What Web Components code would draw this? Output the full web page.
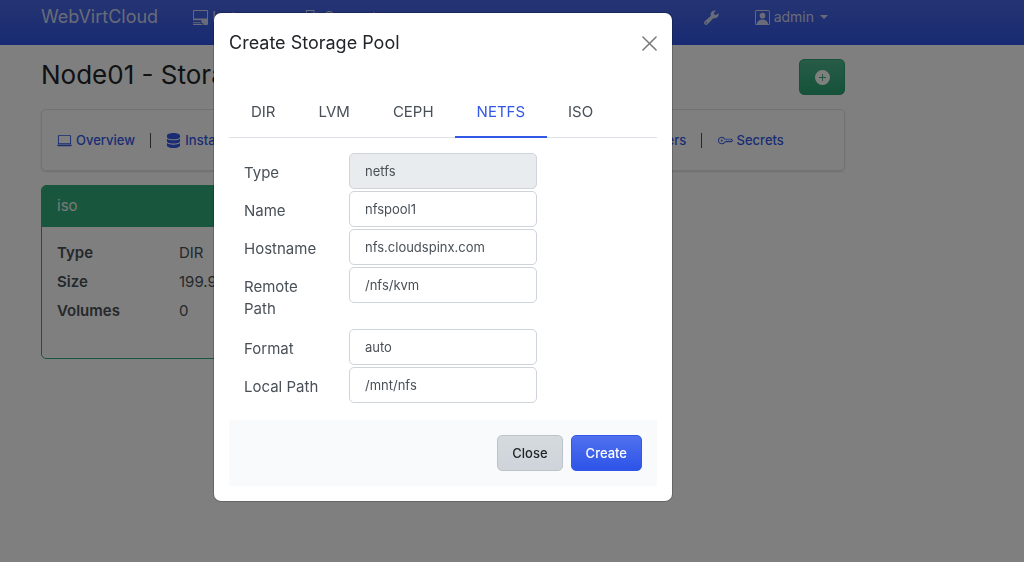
<!DOCTYPE html>
<html lang="en">
<head>
<meta charset="utf-8">
<meta name="viewport" content="width=device-width, initial-scale=1">
<title>WebVirtCloud</title>
<style>
  body { margin: 0; font: 15px/22px Inter, "Liberation Sans", sans-serif; color: #495057; background: #fff; --primary: #3358e8; --green: #30ac7b; --edge: 138px; }
</style>
</head>
<body>
<wvc-navbar></wvc-navbar>
<wvc-page heading="Node01 - Storages">
  <wvc-subnav></wvc-subnav>
  <wvc-pool-card name="iso" type="DIR" size="199.9 GB" volumes="0"></wvc-pool-card>
</wvc-page>
<wvc-modal heading="Create Storage Pool">
  <wvc-tabs items="DIR,LVM,CEPH,NETFS,ISO" active="NETFS"></wvc-tabs>
  <wvc-pool-form></wvc-pool-form>
</wvc-modal>
<script>
const ICONS = {
  instances: '<path fill-rule="evenodd" d="M1 0h14a1 1 0 0 1 1 1v14a1 1 0 0 1-1 1h-4v-2H9v-2H0V1a1 1 0 0 1 1-1zm0 1v8h14V1zM0 11h9v1H0zM0 13h8v1H0zM0 15h10v1H0z"/>',
  computes: '<path fill-rule="evenodd" d="M1 0h9v3h5v12H7v-3H1zm1 1v10h5V3h2V1zm6 3v10h6V4zM9 5h4v1H9z"/>',
  wrench: '<path fill-rule="evenodd" d="M15.300 3.100 13 5.400l-2-.5-.5-2L12.800.7A4.300 4.300 0 0 0 7.300 6L.8 12.100a2.100 2.100 0 0 0 3 3.100L10 8.700a4.300 4.300 0 0 0 5.300-5.600zM2.300 14.500a.8.8 0 1 1 0-1.600.8.8 0 0 1 0 1.600z"/>',
  person: '<path d="M11 6a3 3 0 1 1-6 0 3 3 0 0 1 6 0"/><path fill-rule="evenodd" d="M2 0a2 2 0 0 0-2 2v12a2 2 0 0 0 2 2h12a2 2 0 0 0 2-2V2a2 2 0 0 0-2-2zm0 1h12a1 1 0 0 1 1 1v12a1 1 0 0 1-1 1c0-1-1-5-6-5s-6 4-6 5a1 1 0 0 1-1-1V2a1 1 0 0 1 1-1"/>',
  laptop: '<path d="M13.5 3a.5.5 0 0 1 .5.5V11H2V3.500a.5.5 0 0 1 .5-.5zm-11-1A1.500 1.500 0 0 0 1 3.500V12h14V3.500A1.500 1.500 0 0 0 13.500 2zM0 12.500h16a1.500 1.500 0 0 1-1.500 1.500h-13A1.500 1.500 0 0 1 0 12.500"/>',
  stack: '<path d="M1 3c0-4 14-4 14 0v1.300c0 3.300-14 3.300-14 0zM1 6c2.500 2.400 11.500 2.400 14 0v2.800c0 3.300-14 3.300-14 0zM1 10.700c2.500 2.400 11.500 2.400 14 0V13c0 4-14 4-14 0z"/>',
  key: '<path d="M0 8a4 4 0 0 1 7.465-2H14a.5.5 0 0 1 .354.146l1.500 1.500a.5.5 0 0 1 0 .708l-1.500 1.500a.5.5 0 0 1-.708 0L13 9.207l-.646.647a.5.5 0 0 1-.708 0L11 9.207l-.646.647a.5.5 0 0 1-.708 0L9 9.207l-.646.647A.5.5 0 0 1 8 10h-.535A4 4 0 0 1 0 8m4-3a3 3 0 1 0 2.712 4.285A.5.5 0 0 1 7.163 9h.63l.853-.854a.5.5 0 0 1 .708 0l.646.647.646-.647a.5.5 0 0 1 .708 0l.646.647.646-.647a.5.5 0 0 1 .708 0l.646.647.793-.793-1-1h-6.630a.5.5 0 0 1-.451-.285A3 3 0 0 0 4 5"/><circle cx="4" cy="8" r="1"/>',
  plus: '<path fill-rule="evenodd" d="M16 8A8 8 0 1 1 0 8a8 8 0 0 1 16 0M8.500 4.500a.5.5 0 0 0-1 0v3h-3a.5.5 0 0 0 0 1h3v3a.5.5 0 0 0 1 0v-3h3a.5.5 0 0 0 0-1h-3z"/>',
  close: '<path d="M1 1l14 14M15 1L1 15" fill="none" stroke="currentColor" stroke-width="1.600" stroke-linecap="round"/>'
};

class Base extends HTMLElement {
  connectedCallback() {
    if (this.shadowRoot) return;
    this.attachShadow({ mode: "open" }).innerHTML =
      `<style>*{box-sizing:border-box}${this.css()}</style>${this.html()}`;
  }
}
const define = (tag, css, html) =>
  customElements.define(tag, class extends Base {
    css() { return css; }
    html() { return html(this); }
  });

define("wvc-icon",
  `:host{display:inline-flex;flex:none} svg{width:var(--size,15px);height:var(--size,15px);fill:currentColor}`,
  el => `<svg viewBox="0 0 16 16" aria-hidden="true">${ICONS[el.getAttribute("name")]}</svg>`);

define("wvc-navbar",
  `:host{display:block;background:linear-gradient(#4a68e4,#3055e4);color:#d2d7f0}
   nav{display:flex;align-items:center;height:45px;padding:0 calc(var(--edge) + 58px) 11px 41px}
   a{display:flex;align-items:center;gap:4px;color:inherit;text-decoration:none;font-size:14px}
   .brand{font-size:18px;margin-right:35px}
   .links{display:flex;gap:29px;flex:1}
   .tools{display:flex;gap:36px}
   .caret{border:4px solid transparent;border-top-color:currentColor;border-bottom:0;margin-left:2px}`,
  () => `<nav><a class="brand" href="#">WebVirtCloud</a>
   <div class="links"><a href="#"><wvc-icon name="instances"></wvc-icon>Instances</a>
   <a href="#"><wvc-icon name="computes"></wvc-icon>Computes</a></div>
   <div class="tools"><a href="#" aria-label="Settings"><wvc-icon name="wrench"></wvc-icon></a>
   <a href="#"><wvc-icon name="person"></wvc-icon>admin <span class="caret"></span></a></div></nav>`);

define("wvc-page",
  `:host{display:block;padding:14px calc(var(--edge) + 41px) 15px 41px}
   header{display:flex;justify-content:space-between;align-items:flex-start;margin-bottom:14px}
   h1{margin:0;font-size:26px;line-height:32px;font-weight:400;color:#212529}
   button{width:46px;height:36px;border:1px solid #2aa473;border-radius:5px;background:linear-gradient(#4fb88f,#2ba574);color:#fff;display:flex;align-items:center;justify-content:center}
   main{display:flex;flex-direction:column;gap:14px}`,
  el => `<header><h1>${el.getAttribute("heading")}</h1><button type="button" aria-label="Add storage"><wvc-icon name="plus"></wvc-icon></button></header><main><slot></slot></main>`);

define("wvc-subnav",
  `:host{display:block;border:1px solid #e4e4e4;border-radius:5px;box-shadow:0 1px 2px #0002}
   nav{display:flex;align-items:center;height:60px;padding:0 60px 0 15px;justify-content:space-between}
   a{display:flex;align-items:center;gap:4px;color:var(--primary);text-decoration:none;font-size:13px;font-weight:500}
   i{width:1px;height:15px;background:#495057}`,
  () => `<nav>${[["laptop","Overview"],["stack","Instances"],["stack","Storages"],["laptop","Networks"],["laptop","Interfaces"],["key","NWFilters"],["key","Secrets"]]
    .map(([i, t]) => `<a href="#"><wvc-icon name="${i}"></wvc-icon>${t}</a>`).join("<i></i>")}</nav>`);

define("wvc-pool-card",
  `:host{display:block;width:32%;border:1px solid var(--green);border-radius:5px;overflow:hidden}
   header{height:41px;padding:9px 15px;background:var(--green);color:#f4f4f4}
   dl{display:grid;grid-template-columns:122px 1fr;gap:7px 0;margin:0;padding:15px 15px 36px}
   dt{font-weight:600} dd{margin:0}`,
  el => { const a = n => el.getAttribute(n);
    return `<header>${a("name")}</header><dl><dt>Type</dt><dd>${a("type")}</dd><dt>Size</dt><dd>${a("size")}</dd><dt>Volumes</dt><dd>${a("volumes")}</dd></dl>`; });

define("wvc-modal",
  `:host{position:fixed;inset:0;background:rgba(0,0,0,.5);display:flex;justify-content:center;align-items:flex-start;padding:13px var(--edge) 13px 0}
   section{width:458px;background:#fff;border-radius:7px;padding:15px;box-shadow:0 0 0 1px #0003}
   header{display:flex;justify-content:space-between;align-items:center;height:30px;margin-bottom:29px}
   h2{margin:0;font-size:18px;font-weight:400;color:#212529}
   button{border:0;background:none;padding:0;color:#777;display:flex;--size:15px}`,
  el => `<section role="dialog" aria-modal="true" aria-labelledby="t"><header><h2 id="t">${el.getAttribute("heading")}</h2><button type="button" aria-label="Dismiss"><wvc-icon name="close"></wvc-icon></button></header><slot></slot></section>`);

define("wvc-tabs",
  `:host{display:block}
   div{display:flex;border-bottom:1px solid #dee2e6}
   button{font:inherit;color:inherit;background:none;border:0;border-bottom:2px solid transparent;padding:14px 22px 13px;margin:0 -1px -1px 0}
   [aria-selected=true]{color:var(--primary);border-color:var(--primary)}`,
  el => `<div role="tablist">${el.getAttribute("items").split(",").map(t => `<button type="button" role="tab" aria-selected="${t === el.getAttribute("active")}">${t}</button>`).join("")}</div>`);

define("wvc-pool-form",
  `:host{display:block}
   .fields{display:grid;gap:2px;padding:15px 15px 17px}
   .row{display:grid;grid-template-columns:75px 188px;column-gap:30px;align-items:start}
   label{padding:9px 0 7px}
   .row:not(.tall) label{height:36px;white-space:nowrap}
   input{width:100%;height:36px;border:1px solid #ced4da;border-radius:5px;padding:0 15px;font:inherit;font-size:13px;color:#495057;background:#fff}
   input:disabled{background:#e9ecef}
   footer{display:flex;justify-content:flex-end;gap:8px;padding:15px;background:#f8fafc}
   button{height:36px;padding:0 14px;border-radius:5px;font:inherit;font-size:13px;font-weight:500}
   .close{color:#212529;border:1px solid #bcc3c9;background:linear-gradient(#d5dadd,#ced4da)}
   .create{color:#fff;border:1px solid #3358e8;background:linear-gradient(#5070ee,#2d54e8)}`,
  () => `<form><div class="fields">${[["Type","netfs"],["Name","nfspool1"],["Hostname","nfs.cloudspinx.com"],["Remote Path","/nfs/kvm"],["Format","auto"],["Local Path","/mnt/nfs"]]
    .map(([l, v], i) => `<div class="row${i === 3 ? " tall" : ""}"><label for="f${i}">${l}</label><input id="f${i}" value="${v}"${i ? "" : " disabled"}></div>`).join("")}</div>
   <footer><button class="close" type="button">Close</button><button class="create" type="button">Create</button></footer></form>`);
</script>
</body>
</html>
